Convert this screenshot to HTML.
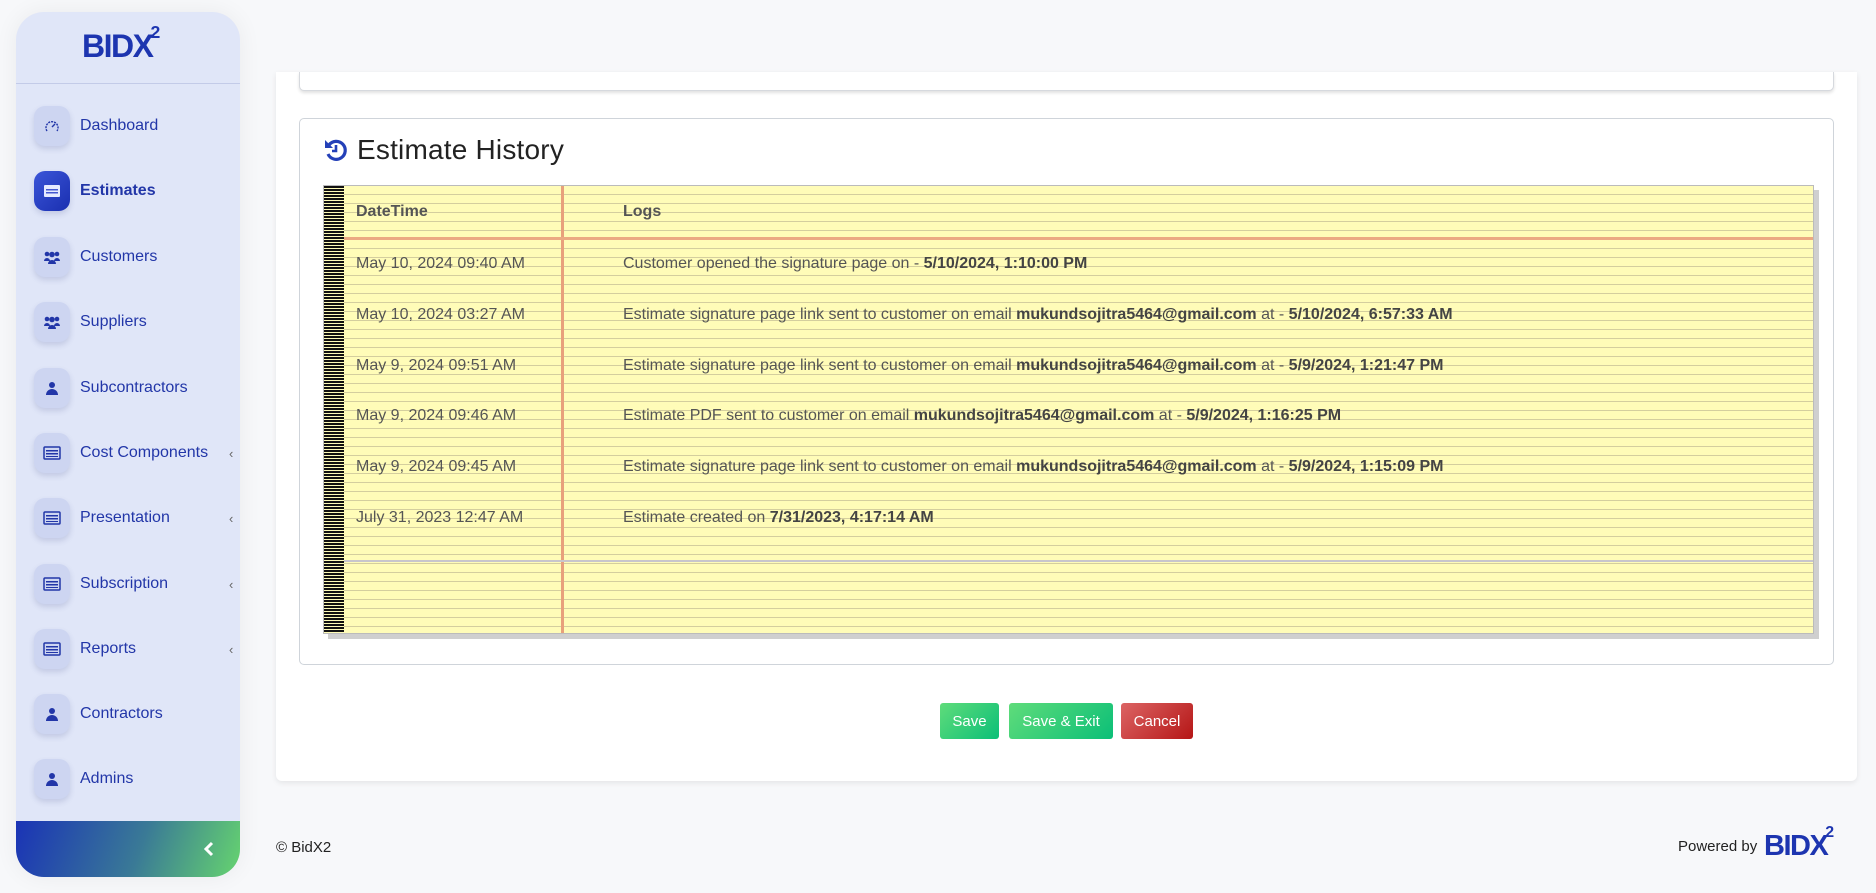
<!DOCTYPE html>
<html><head><meta charset="utf-8"><style>
*{box-sizing:border-box;margin:0;padding:0}
body{width:1876px;height:893px;background:#f7f8fa;font-family:"Liberation Sans",sans-serif;position:relative;overflow:hidden}
.sb{position:absolute;left:16px;top:12px;width:224px;height:865px;background:#e0e6f8;border-radius:28px;overflow:hidden;box-shadow:0 0 24px rgba(0,0,0,.06)}
.logo{height:72px;border-bottom:1px solid #c3cbe8;position:relative}
.lg{font-family:"Liberation Sans",sans-serif;font-weight:bold;color:#1d35b0;letter-spacing:-1.5px;white-space:nowrap;position:absolute}
.lg sup{font-size:.55em;position:relative;top:-.35em;vertical-align:top;letter-spacing:0;margin-left:-2px}
.item{position:absolute;left:18px;height:44px;display:flex;align-items:center}
.ib{width:36px;height:40px;border-radius:11px;background:#cdd5f1;box-shadow:0 3px 6px rgba(60,70,140,.18);display:flex;align-items:center;justify-content:center}
.ib.act{background:linear-gradient(135deg,#3b55d8,#1a2fb0)}
.it{margin-left:10px;font-size:16px;color:#2236a8}
.chev{position:absolute;left:195px;font-size:13px;color:#666}
.sbf{position:absolute;left:0;bottom:0;width:224px;height:56px;background:linear-gradient(110deg,#1a33b6 0%,#3a7a96 55%,#66d46f 100%)}
.main{position:absolute;left:276px;top:72px;width:1581px;height:709px;background:#fff;border-radius:0 0 6px 6px;box-shadow:0 2px 6px rgba(0,0,0,.08)}
.card0{position:absolute;left:299px;top:72px;width:1535px;height:19px;background:#fff;border:1px solid #d6d9de;border-top:none;border-radius:0 0 5px 5px;box-shadow:0 2px 3px rgba(0,0,0,.12)}
.card{position:absolute;left:299px;top:118px;width:1535px;height:547px;border:1px solid #cfd4da;border-radius:5px}
.title{position:absolute;left:323px;top:134px;font-size:28px;color:#222;display:flex;align-items:center;font-weight:500;letter-spacing:.2px}
.pad{position:absolute;left:323px;top:185px;width:1491px;height:449px;border:1px solid #bbb;box-shadow:5px 5px 0 #cfcfcf;
background-color:#fffcb8;background-image:repeating-linear-gradient(180deg,transparent 0,transparent 8px,#d4ce9e 8px,#d4ce9e 9px)}
.stripes{position:absolute;left:0;top:0;width:20px;height:100%;background:repeating-linear-gradient(180deg,#111 0,#111 2px,#fffcb8 2px,#fffcb8 3px)}
.vl{position:absolute;left:237px;top:0;width:3px;height:100%;background:#e8a07c}
.hl{position:absolute;left:20px;top:51px;right:0;height:3px;background:#eba982}
.gl{position:absolute;left:20px;top:374px;right:0;height:2px;background:#c8c6cc}
.c{position:absolute;font-size:16px;color:#555;white-space:nowrap}
.c b{color:#444}
.btn{position:absolute;top:703px;height:36px;border-radius:3px;color:#fff;font-size:15px;display:flex;align-items:center;justify-content:center}
.g{background:linear-gradient(135deg,#5fdc7a,#0bbf78)}
.r{background:linear-gradient(135deg,#dc6464,#b51616)}
</style></head><body>
<div class="sb">
 <div class="logo"><div class="lg" style="left:66px;top:16px;font-size:32px">BID<span style="color:#1d35b0">X</span><sup>2</sup></div></div>
 <div class="item" style="top:92px"><div class="ib"><svg width="16" height="16" viewBox="0 0 16 16"><path d="M3 13A6 6 0 1 1 13 13" fill="none" stroke="#2236a8" stroke-width="1.4" stroke-dasharray="2 1"/><path d="M8 9l3-3" stroke="#2236a8" stroke-width="1.4"/></svg></div><span class="it">Dashboard</span></div>
 <div class="item" style="top:157px"><div class="ib act"><svg width="18" height="14"><rect x="1" y="1" width="16" height="12" rx="1" fill="#e6eaff"/><rect x="3" y="5" width="12" height="1.5" fill="#4458d0"/><rect x="3" y="8" width="12" height="1.5" fill="#4458d0"/></svg></div><span class="it" style="font-weight:bold">Estimates</span></div>
 <div class="item" style="top:223px"><div class="ib"><svg width="18" height="14"><circle cx="4" cy="4" r="2.3" fill="#2236a8"/><circle cx="14" cy="4" r="2.3" fill="#2236a8"/><circle cx="9" cy="4.5" r="2.8" fill="#2236a8"/><path d="M1 11a3 3 0 0 1 6 0zM11 11a3 3 0 0 1 6 0zM5 14a4 4 0 0 1 8 0z" fill="#2236a8"/></svg></div><span class="it">Customers</span></div>
 <div class="item" style="top:288px"><div class="ib"><svg width="18" height="14"><circle cx="4" cy="4" r="2.3" fill="#2236a8"/><circle cx="14" cy="4" r="2.3" fill="#2236a8"/><circle cx="9" cy="4.5" r="2.8" fill="#2236a8"/><path d="M1 11a3 3 0 0 1 6 0zM11 11a3 3 0 0 1 6 0zM5 14a4 4 0 0 1 8 0z" fill="#2236a8"/></svg></div><span class="it">Suppliers</span></div>
 <div class="item" style="top:354px"><div class="ib"><svg width="12" height="14"><circle cx="6" cy="4" r="3" fill="#2236a8"/><path d="M0 14a6 6 0 0 1 12 0z" fill="#2236a8"/></svg></div><span class="it">Subcontractors</span></div>
 <div class="item" style="top:419px"><div class="ib"><svg width="18" height="14"><rect x="1" y="1" width="16" height="12" rx="1" fill="none" stroke="#2236a8" stroke-width="1.5"/><rect x="3" y="4" width="12" height="1.5" fill="#2236a8"/><rect x="3" y="7" width="12" height="1.5" fill="#2236a8"/><rect x="3" y="10" width="12" height="1" fill="#2236a8"/></svg></div><span class="it">Cost Components</span><span class="chev">&#8249;</span></div>
 <div class="item" style="top:484px"><div class="ib"><svg width="18" height="14"><rect x="1" y="1" width="16" height="12" rx="1" fill="none" stroke="#2236a8" stroke-width="1.5"/><rect x="3" y="4" width="12" height="1.5" fill="#2236a8"/><rect x="3" y="7" width="12" height="1.5" fill="#2236a8"/><rect x="3" y="10" width="12" height="1" fill="#2236a8"/></svg></div><span class="it">Presentation</span><span class="chev">&#8249;</span></div>
 <div class="item" style="top:550px"><div class="ib"><svg width="18" height="14"><rect x="1" y="1" width="16" height="12" rx="1" fill="none" stroke="#2236a8" stroke-width="1.5"/><rect x="3" y="4" width="12" height="1.5" fill="#2236a8"/><rect x="3" y="7" width="12" height="1.5" fill="#2236a8"/><rect x="3" y="10" width="12" height="1" fill="#2236a8"/></svg></div><span class="it">Subscription</span><span class="chev">&#8249;</span></div>
 <div class="item" style="top:615px"><div class="ib"><svg width="18" height="14"><rect x="1" y="1" width="16" height="12" rx="1" fill="none" stroke="#2236a8" stroke-width="1.5"/><rect x="3" y="4" width="12" height="1.5" fill="#2236a8"/><rect x="3" y="7" width="12" height="1.5" fill="#2236a8"/><rect x="3" y="10" width="12" height="1" fill="#2236a8"/></svg></div><span class="it">Reports</span><span class="chev">&#8249;</span></div>
 <div class="item" style="top:680px"><div class="ib"><svg width="12" height="14"><circle cx="6" cy="4" r="3" fill="#2236a8"/><path d="M0 14a6 6 0 0 1 12 0z" fill="#2236a8"/></svg></div><span class="it">Contractors</span></div>
 <div class="item" style="top:745px"><div class="ib"><svg width="12" height="14"><circle cx="6" cy="4" r="3" fill="#2236a8"/><path d="M0 14a6 6 0 0 1 12 0z" fill="#2236a8"/></svg></div><span class="it">Admins</span></div>
 <div class="sbf"><svg style="position:absolute;left:188px;top:20px" width="10" height="16"><path d="M8 2L2 8l6 6" fill="none" stroke="#fff" stroke-width="3"/></svg></div>
</div>
<div class="main"></div>
<div class="card0"></div>
<div class="card"></div>
<div class="title"><svg width="26" height="26" viewBox="0 0 26 26" style="margin-right:8px"><path d="M6 8A9 9 0 1 1 5 17" fill="none" stroke="#2440b8" stroke-width="3.2"/><path d="M2 3v8h8z" fill="#2440b8"/><path d="M13 8v6h-4" fill="none" stroke="#2440b8" stroke-width="2.6"/></svg>Estimate History</div>
<div class="pad">
 <div class="stripes"></div><div class="vl"></div><div class="hl"></div><div class="gl"></div>
 <div class="c" style="left:32px;top:17px;font-weight:bold">DateTime</div>
 <div class="c" style="left:299px;top:17px;font-weight:bold">Logs</div>
 <div class="c" style="left:32px;top:69px">May 10, 2024 09:40 AM</div>
 <div class="c" style="left:299px;top:69px">Customer opened the signature page on - <b>5/10/2024, 1:10:00 PM</b></div>
 <div class="c" style="left:32px;top:120px">May 10, 2024 03:27 AM</div>
 <div class="c" style="left:299px;top:120px">Estimate signature page link sent to customer on email <b>mukundsojitra5464@gmail.com</b> at - <b>5/10/2024, 6:57:33 AM</b></div>
 <div class="c" style="left:32px;top:171px">May 9, 2024 09:51 AM</div>
 <div class="c" style="left:299px;top:171px">Estimate signature page link sent to customer on email <b>mukundsojitra5464@gmail.com</b> at - <b>5/9/2024, 1:21:47 PM</b></div>
 <div class="c" style="left:32px;top:221px">May 9, 2024 09:46 AM</div>
 <div class="c" style="left:299px;top:221px">Estimate PDF sent to customer on email <b>mukundsojitra5464@gmail.com</b> at - <b>5/9/2024, 1:16:25 PM</b></div>
 <div class="c" style="left:32px;top:272px">May 9, 2024 09:45 AM</div>
 <div class="c" style="left:299px;top:272px">Estimate signature page link sent to customer on email <b>mukundsojitra5464@gmail.com</b> at - <b>5/9/2024, 1:15:09 PM</b></div>
 <div class="c" style="left:32px;top:323px">July 31, 2023 12:47 AM</div>
 <div class="c" style="left:299px;top:323px">Estimate created on <b>7/31/2023, 4:17:14 AM</b></div>
</div>
<div class="btn g" style="left:940px;width:59px">Save</div>
<div class="btn g" style="left:1009px;width:104px">Save &amp; Exit</div>
<div class="btn r" style="left:1121px;width:72px">Cancel</div>
<div style="position:absolute;left:276px;top:839px;font-size:15px;color:#222">© BidX2</div>
<div style="position:absolute;left:1678px;top:838px;font-size:15px;color:#222">Powered by</div>
<div class="lg" style="left:1764px;top:830px;font-size:29px">BIDX<sup>2</sup></div>
</body></html>
